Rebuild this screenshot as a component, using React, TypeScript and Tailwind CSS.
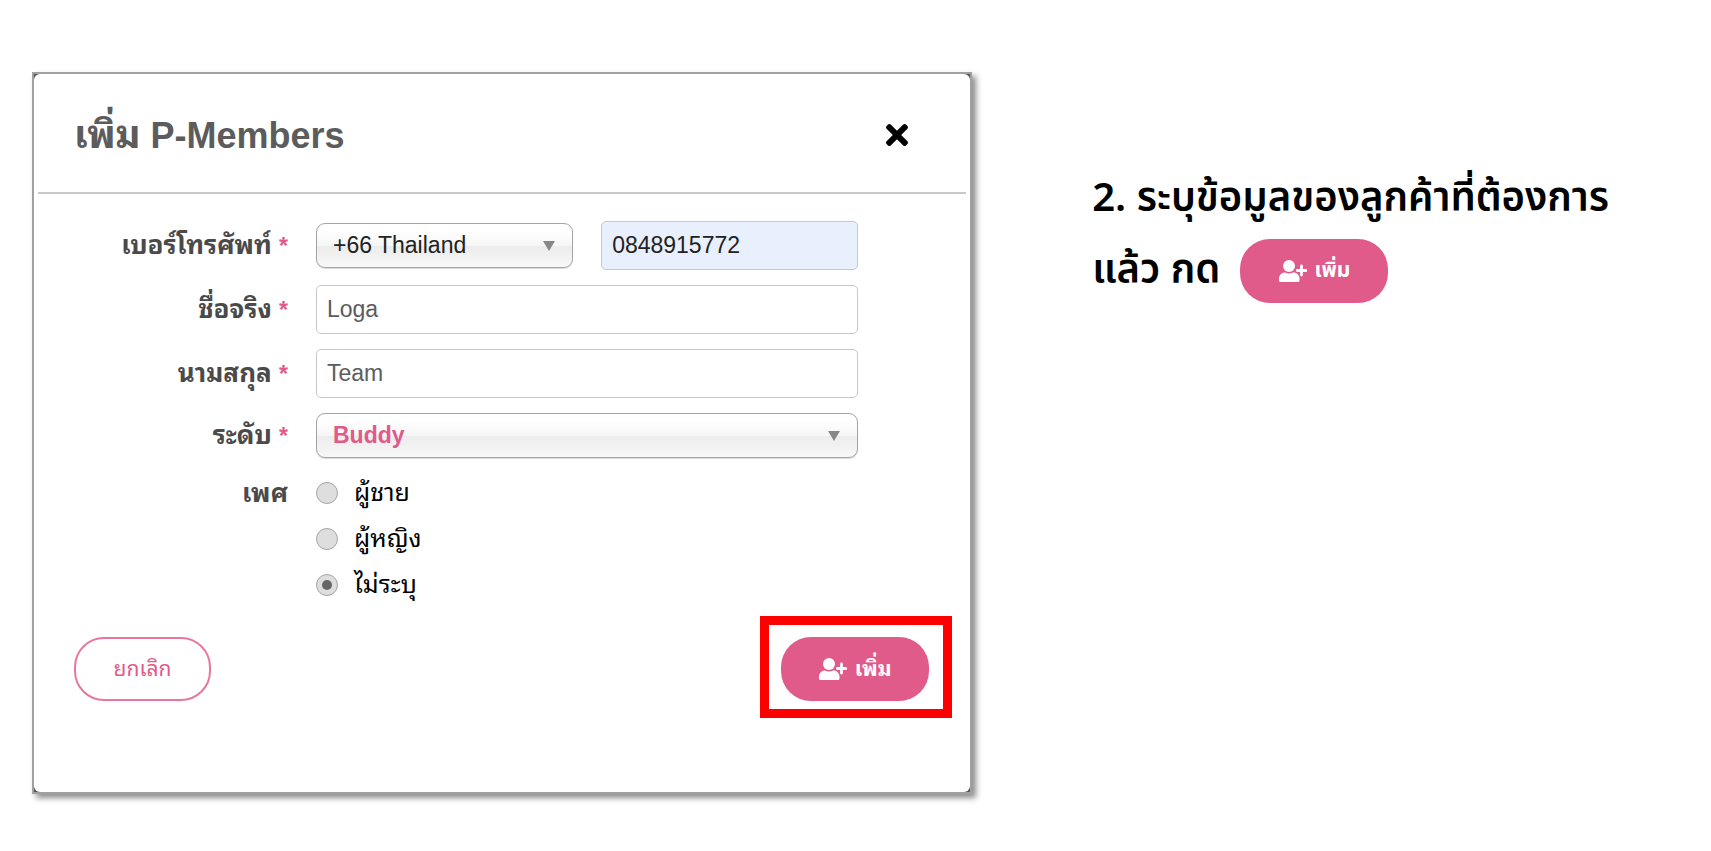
import { useState } from "react";
import type { ReactNode } from "react";
import { FaTimes } from "react-icons/fa";

const genders = [
  { value: "male", label: "ผู้ชาย" },
  { value: "female", label: "ผู้หญิง" },
  { value: "none", label: "ไม่ระบุ" },
];

const inputClass =
  "h-[49px] w-full min-w-0 rounded-[5px] border border-[#c8c8c8] px-2.5 text-[23px] outline-none";

const labelClass = "w-60 shrink-0 text-right text-[26px] leading-8 font-bold text-[#4a4a4a]";

function Row({ label, htmlFor, children }: { label: string; htmlFor: string; children: ReactNode }) {
  return (
    <div className="flex items-center gap-7">
      <label htmlFor={htmlFor} className={labelClass}>
        {label} <span className="text-[23px] text-[#e05b8a]">*</span>
      </label>
      <div className="flex min-w-0 flex-1 items-center gap-7">{children}</div>
    </div>
  );
}

type SelectProps = { id: string; label?: string; options: string[]; className: string };

function Select({ id, label, options, className }: SelectProps) {
  return (
    <div className="relative min-w-0 flex-1">
      <select
        id={id}
        aria-label={label}
        className={`block h-[45px] w-full appearance-none rounded-[9px] border border-[#a4a4a4] bg-[linear-gradient(#fff_15%,#f6f6f6_50%,#ececec_52%,#f8f8f8)] px-4 text-[23px] shadow-[0_1px_1px_rgba(0,0,0,0.15)] outline-none ${className}`}
      >
        {options.map((option) => (
          <option key={option}>{option}</option>
        ))}
      </select>
      <svg viewBox="0 0 12 10" className="pointer-events-none absolute top-[18px] right-[18px] h-2.5 w-3" aria-hidden="true">
        <path d="M0 0h12L6 10z" fill="#888" />
      </svg>
    </div>
  );
}

function UserPlusIcon() {
  return (
    <svg viewBox="0 0 28 22" className="h-[22px] w-7" fill="currentColor" aria-hidden="true">
      <circle cx="10" cy="6" r="6" />
      <path d="M6 12.5c1.2.7 2.6 1 4 1s2.8-.3 4-1h.5c3.300 0 6 2.700 6 6V20.500a1.500 1.500 0 0 1-1.500 1.500H1.500A1.500 1.500 0 0 1 0 20.500V18.500c0-3.300 2.700-6 6-6z" />
      <path d="M22.500 6v9M18.300 10.500h8.400" stroke="currentColor" strokeWidth="2.800" strokeLinecap="round" />
    </svg>
  );
}

function AddButton() {
  return (
    <button
      type="button"
      className="flex h-16 w-[148px] items-center justify-center gap-2 rounded-[30px] bg-[#e05b8a] text-[21px] font-bold text-white"
    >
      <UserPlusIcon />
      เพิ่ม
    </button>
  );
}

export default function App() {
  const [gender, setGender] = useState("none");

  return (
    <main className="flex min-h-screen items-start bg-white pt-18 pl-8 font-['Liberation_Sans','Noto_Sans_Thai_Looped','Loma','Tahoma','Noto_Sans_Thai',sans-serif]">
      {/* Member dialog */}
      <section className="w-[56%] border-2 border-[#a0a0a0] bg-[#555] shadow-[4px_4px_6px_rgba(0,0,0,0.45)]">
        <div className="rounded-md bg-white px-1 pb-[74px]">
          <header className="flex h-30 items-center justify-between border-b-2 border-[#c8c8c8] pt-1 pr-[58px] pl-9">
            <h1 className="text-4xl font-bold text-[#5c5c5c]">
              <span className="text-[38px]">เพิ่ม</span> P-Members
            </h1>
            <button type="button" aria-label="ปิด" className="text-black">
              <FaTimes className="h-8 w-[22px]" />
            </button>
          </header>

          <form className="pt-[27px]">
            <div className="flex flex-col gap-[15px] pr-[108px] pl-2.5">
              <Row label="เบอร์โทรศัพท์" htmlFor="phone">
                <Select id="country" label="รหัสประเทศ" options={["+66 Thailand"]} className="text-[#222]" />
                <div className="min-w-0 flex-1">
                  <input id="phone" type="tel" defaultValue="0848915772" className={`${inputClass} bg-[#e8f0fe] text-[#222]`} />
                </div>
              </Row>
              <Row label="ชื่อจริง" htmlFor="first-name">
                <input id="first-name" defaultValue="Loga" className={`${inputClass} text-[#5c5c5c]`} />
              </Row>
              <Row label="นามสกุล" htmlFor="last-name">
                <input id="last-name" defaultValue="Team" className={`${inputClass} text-[#5c5c5c]`} />
              </Row>
              <Row label="ระดับ" htmlFor="level">
                <Select id="level" options={["Buddy"]} className="font-bold text-[#e05b8a]" />
              </Row>
            </div>

            <div role="radiogroup" aria-labelledby="gender-label" className="mt-3 flex gap-7 pl-2.5">
              <span id="gender-label" className={`${labelClass} py-[7px]`}>
                เพศ
              </span>
              <div>
                {genders.map(({ value, label }) => (
                  <label key={value} className="flex h-[46px] items-center gap-4 text-[25px] text-black">
                    <input
                      type="radio"
                      name="gender"
                      value={value}
                      checked={gender === value}
                      onChange={() => setGender(value)}
                      className="grid size-[22px] appearance-none place-items-center rounded-full border border-[#a4a4a4] bg-[#dedede] checked:before:size-2.5 checked:before:rounded-full checked:before:bg-[#666]"
                    />
                    {label}
                  </label>
                ))}
              </div>
            </div>

            <footer className="mt-2 flex items-center justify-between pr-3.5 pl-9">
              <button
                type="button"
                className="mt-1 h-16 w-[137px] rounded-[30px] border-2 border-[#e8779e] bg-white text-[21px] text-[#e05b8a]"
              >
                ยกเลิก
              </button>
              <div className="border-9 border-[#ff0000] pt-3 pr-3.5 pb-2 pl-3">
                <AddButton />
              </div>
            </footer>
          </form>
        </div>
      </section>

      {/* Step instructions */}
      <section className="ml-30 flex-1 pt-[91px] font-['Noto_Sans_Thai','Noto_Sans',sans-serif] text-[40px] leading-[72px] font-semibold text-black">
        <p>2. ระบุข้อมูลของลูกค้าที่ต้องการ</p>
        <div className="flex items-center gap-5">
          <span>แล้ว กด</span>
          <AddButton />
        </div>
      </section>
    </main>
  );
}
